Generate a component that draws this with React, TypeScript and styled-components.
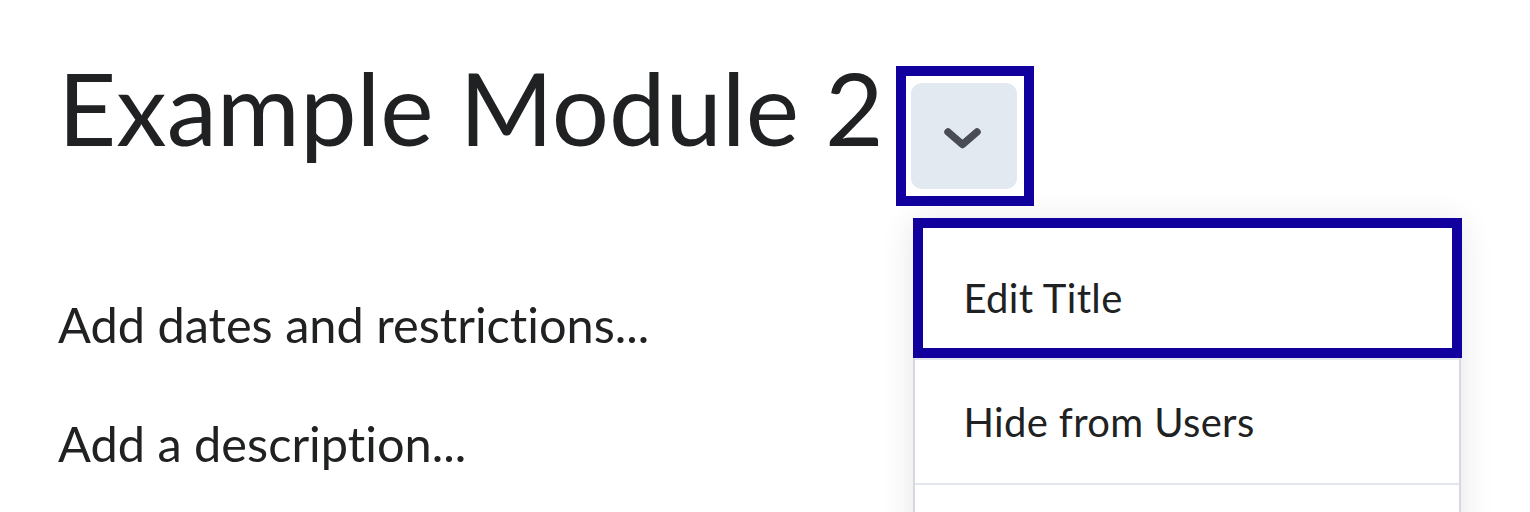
import React from "react";
import styled, { createGlobalStyle } from "styled-components";

const Global = createGlobalStyle`
  html, body { margin: 0; padding: 0; background: #ffffff; }
  body {
    font-family: Lato, "Noto Sans", sans-serif;
    color: #202122;
    overflow: hidden;
    font-variant-ligatures: none;
  }
`;

const Page = styled.div`
  width: 1530px;
  height: 512px;
  box-sizing: border-box;
  padding: 47px 0 0 58px;
  position: relative;
  overflow: hidden;
`;

const Header = styled.div`
  display: flex;
  align-items: flex-start;
`;

const Title = styled.h1`
  margin: 0;
  font-size: 101px;
  font-weight: 400;
  line-height: 1.2;
  color: #202122;
  white-space: nowrap;
`;

const Anchor = styled.div`
  position: relative;
  margin: 36px 0 0 28px;
`;

const MenuButton = styled.button`
  position: relative;
  width: 106px;
  height: 106px;
  border: none;
  border-radius: 11px;
  background: #e3e9f1;
  padding: 0;
  display: flex;
  align-items: center;
  justify-content: center;
  outline: none;
  cursor: pointer;

  &::after {
    content: "";
    position: absolute;
    inset: -17px -17px -17px -15px;
    border: 10px solid #11009e;
    pointer-events: none;
  }
`;

const Menu = styled.div`
  position: absolute;
  top: 135px;
  left: 2px;
  width: 548px;
  box-sizing: border-box;
  background: #ffffff;
  border-left: 2px solid #d6d9df;
  border-right: 2px solid #d6d9df;
  box-shadow: 0 4px 30px rgba(30, 34, 50, 0.12);
  display: flex;
  flex-direction: column;
`;

const Item = styled.div<{ $first?: boolean; $focused?: boolean }>`
  position: relative;
  box-sizing: border-box;
  height: ${(p) => (p.$first ? 140 : 125)}px;
  padding: ${(p) => (p.$first ? "20px" : "0")} 0 0 48px;
  border-top: ${(p) => (p.$first ? "none" : "2px solid #e3e6ea")};
  display: flex;
  align-items: center;
  font-size: 40px;
  letter-spacing: 0.35px;
  line-height: 1.2;
  color: #202122;
  white-space: nowrap;

  ${(p) =>
    p.$focused &&
    `
    &::after {
      content: "";
      position: absolute;
      inset: 0 -3px 0 -2px;
      border: 10px solid #11009e;
      pointer-events: none;
    }
  `}
`;

const Section = styled.div`
  display: flex;
  flex-direction: column;
  gap: 61px;
  margin-top: 106px;
`;

const Line = styled.p`
  margin: 0;
  font-size: 48.7px;
  line-height: 1.2;
  color: #202122;
`;

const Chevron = () => (
  <svg width="106" height="106" viewBox="0 0 106 106" fill="none">
    <path
      d="M37 49 L51.5 61.5 L66 49"
      stroke="#494c55"
      strokeWidth="7.5"
      strokeLinecap="round"
      strokeLinejoin="round"
    />
  </svg>
);

export default function App() {
  return (
    <>
      <Global />
      <Page>
        <Header>
          <Title>Example Module 2</Title>
          <Anchor>
            <MenuButton aria-label="Actions">
              <Chevron />
            </MenuButton>
            <Menu>
              <Item $first $focused>Edit Title</Item>
              <Item>Hide from Users</Item>
              <Item aria-hidden="true" />
            </Menu>
          </Anchor>
        </Header>
        <Section>
          <Line>Add dates and restrictions...</Line>
          <Line>Add a description...</Line>
        </Section>
      </Page>
    </>
  );
}
